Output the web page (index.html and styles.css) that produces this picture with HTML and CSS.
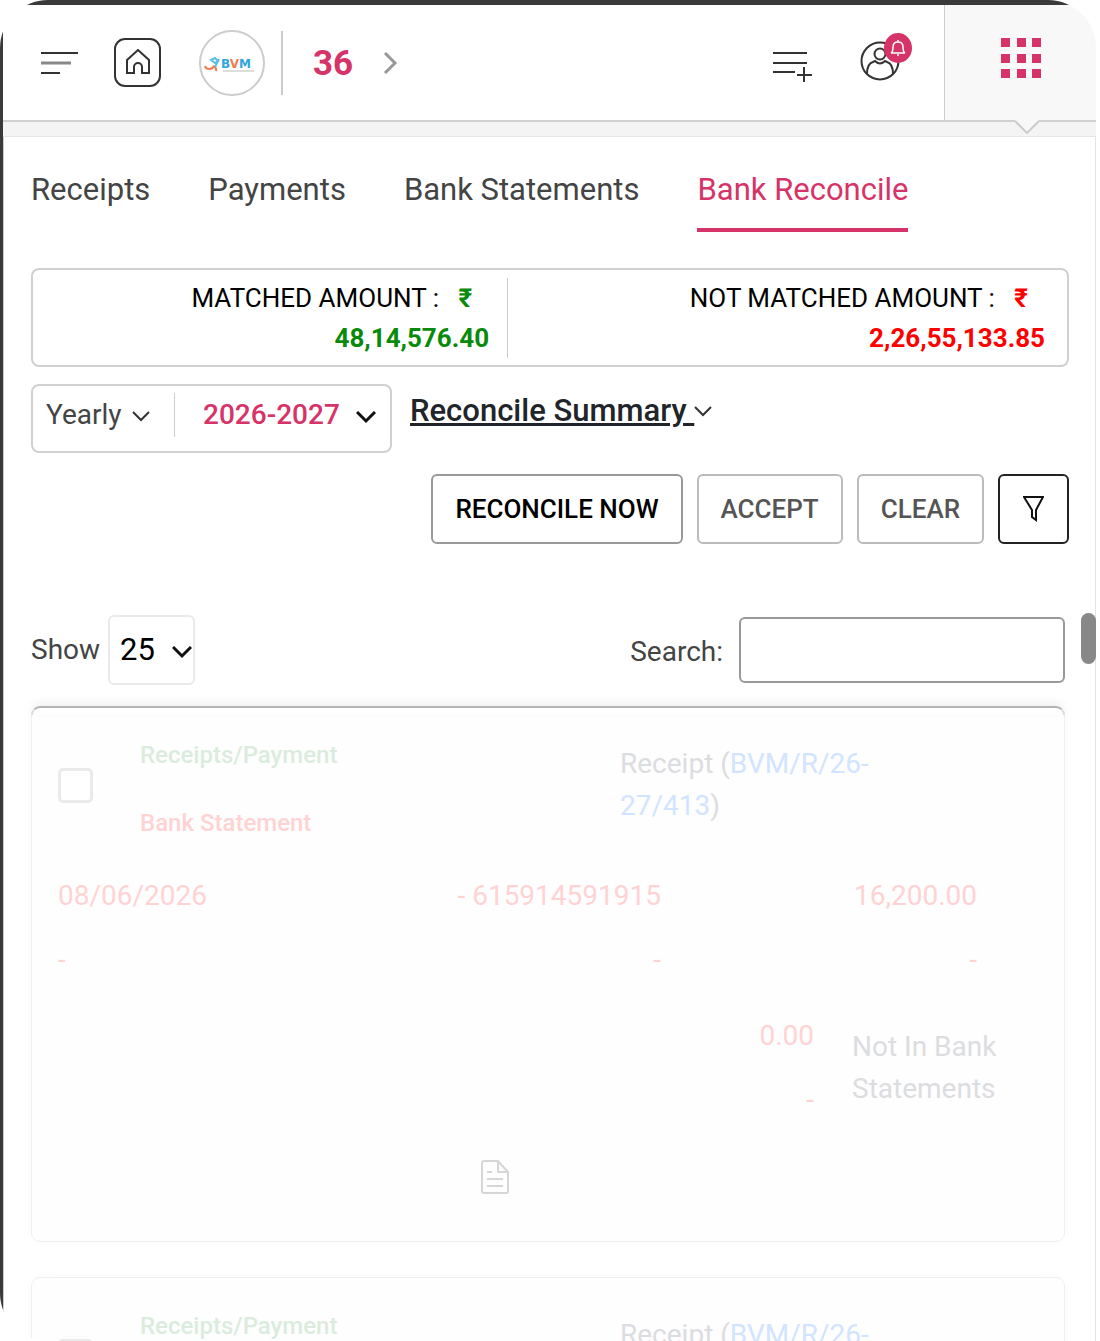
FILE: index.html
```html
<!DOCTYPE html>
<html lang="en">
<head>
<meta charset="utf-8">
<meta name="viewport" content="width=device-width, initial-scale=1">
<title>Bank Reconcile</title>
<link rel="stylesheet" href="styles.css">
</head>
<body>
<div class="frame">
  <div class="screen">
    <header class="topbar">
      <button class="icon-btn menu-btn" aria-label="Menu">
        <svg width="37" height="24" viewBox="0 0 37 24" fill="none" stroke="#333" stroke-width="2"><path d="M0 2h37M0 22h19"/><path d="M0 12h30" stroke="#888" stroke-width="3"/></svg>
      </button>
      <a class="home-btn" href="#" aria-label="Home">
        <svg width="26" height="27" viewBox="0 0 26 27" fill="none" stroke="#333" stroke-width="2"><path d="M2 11 13 1l11 10v13h-7v-6a4 4 0 0 0-8 0v6H2z"/></svg>
      </a>
      <a class="logo" href="#" aria-label="BVM">
        <svg width="56" height="20" viewBox="0 0 56 20">
          <path d="M1 13c1 4 7 4 9 0M9 13q4 2 3 5" fill="none" stroke="#f47a4d" stroke-width="2"/>
          <path d="M7 7l4-2 3 3-3 2zM11 14l4-8" fill="none" stroke="#59bfe3" stroke-width="2"/>
          <text x="17" y="15" class="logo-text"><tspan fill="#2ea5dc">B</tspan><tspan fill="#f47a4d">V</tspan><tspan fill="#2ea5dc">M</tspan></text>
          <path d="M19 18h31" stroke="#ddd" stroke-width="2"/>
        </svg>
      </a>
      <div class="crumb">
        <span class="crumb-num">36</span>
        <svg width="15" height="24" viewBox="0 0 15 24" fill="none" stroke="#999" stroke-width="3"><path d="M2 2l10 10L2 22"/></svg>
      </div>
      <div class="top-actions">
        <button class="icon-btn list-btn" aria-label="Add to list">
          <svg width="40" height="32" viewBox="0 0 40 32" fill="none" stroke="#333" stroke-width="2"><path d="M1 3h34M1 13h34M1 22h22M25 25h15M32 17v15"/></svg>
        </button>
        <button class="icon-btn user-btn" aria-label="Account">
          <svg width="40" height="40" viewBox="0 0 40 40" fill="none" stroke="#333" stroke-width="2"><circle cx="20" cy="20" r="18.500"/><circle cx="20" cy="13" r="5.500"/><path d="M7 33c0-6 2-11 6-12l2-1q5 5 10 0l2 1c4 1 6 6 6 12"/></svg>
          <span class="badge"><svg width="16" height="18" viewBox="0 0 16 18" fill="none" stroke="#fff" stroke-width="1.500"><path d="M8 1v2M1 14c2-1 2-3 2-6 0-3 2-5 5-5s5 2 5 5c0 3 0 5 2 6zM7 16h2"/></svg></span>
        </button>
      </div>
      <button class="apps-btn" aria-label="Apps">
        <svg width="40" height="40" viewBox="0 0 40 40" fill="#d63369"><path d="M0 0h9v9H0zM16 0h9v9h-9zM31 0h9v9h-9zM0 16h9v9H0zM16 16h9v9h-9zM31 16h9v9h-9zM0 31h9v9H0zM16 31h9v9h-9zM31 31h9v9h-9z"/></svg>
      </button>
    </header>
    <div class="strip">
      <svg class="notch" width="24" height="14" viewBox="0 0 24 14"><path d="M0 0h24v1L12 13 0 1z" fill="#f8f8f8"/><path d="M0 1 12 13 24 1" fill="none" stroke="#ccc" stroke-width="2"/></svg>
    </div>

    <main class="content">
      <nav class="tabs">
        <a href="#">Receipts</a>
        <a href="#">Payments</a>
        <a href="#">Bank Statements</a>
        <a href="#" class="active">Bank Reconcile</a>
      </nav>

      <section class="totals">
        <div class="total matched">MATCHED AMOUNT : <b class="rupee">₹</b><br><b>48,14,576.40</b></div>
        <div class="total unmatched">NOT MATCHED AMOUNT : <b class="rupee">₹</b><br><b>2,26,55,133.85</b></div>
      </section>

      <div class="period-row">
        <div class="period">
          <div class="pick pick-mode">
            <select aria-label="Period"><option>Yearly</option></select>
            <svg width="18" height="11" viewBox="0 0 18 11" fill="none" stroke="#333" stroke-width="2"><path d="M1 1l8 8 8-8"/></svg>
          </div>
          <div class="pick pick-year">
            <select aria-label="Year"><option>2026-2027</option></select>
            <svg width="20" height="13" viewBox="0 0 20 13" fill="none" stroke="#111" stroke-width="3"><path d="M1 1l9 9 9-9"/></svg>
          </div>
        </div>
        <a class="summary" href="#"><span>Reconcile Summary&nbsp;</span><svg width="18" height="11" viewBox="0 0 18 11" fill="none" stroke="#333" stroke-width="2"><path d="M1 1l8 8 8-8"/></svg></a>
      </div>

      <div class="actions">
        <button class="btn btn-main">RECONCILE NOW</button>
        <button class="btn">ACCEPT</button>
        <button class="btn">CLEAR</button>
        <button class="btn btn-filter" aria-label="Filter"><svg width="21" height="26" viewBox="0 0 21 26" fill="none" stroke="#111" stroke-width="2"><path d="M1 1h19l-7 13v10l-4-3v-7z"/></svg></button>
      </div>

      <section class="listing">
        <div class="controls">
          <label for="size">Show</label>
          <div class="pick pick-size">
            <select id="size"><option>25</option></select>
            <svg width="20" height="13" viewBox="0 0 20 13" fill="none" stroke="#111" stroke-width="3"><path d="M1 1l9 9 9-9"/></svg>
          </div>
          <label class="search-label" for="search">Search:</label>
          <input id="search" class="search" type="search">
        </div>

        <div class="list-top"></div>
        <article class="card">
          <div class="row-head">
            <input type="checkbox" class="tick" aria-label="Select entry">
            <div class="kinds"><span class="kind-receipt">Receipts/Payment</span><span class="kind-bank">Bank Statement</span></div>
            <div class="ref">Receipt (<a href="#">BVM/R/26-<wbr>27/413</a>)</div>
          </div>
          <div class="row-values">
            <span>08/06/2026</span><span>- 615914591915</span><span>16,200.00</span>
            <span>-</span><span>-</span><span>-</span>
          </div>
          <div class="row-status">
            <div class="diff"><span>0.00</span><span>-</span></div>
            <div class="status">Not In Bank Statements</div>
          </div>
          <div class="row-doc">
            <button class="icon-btn" aria-label="Details"><svg width="28" height="34" viewBox="0 0 28 34" fill="none" stroke="#d6d6d6" stroke-width="2"><path d="M3 1h14l10 11v19a2 2 0 0 1-2 2H3a2 2 0 0 1-2-2V3a2 2 0 0 1 2-2zM17 1v11h10M6 12h5M6 19h16M6 26h16"/></svg></button>
          </div>
        </article>
        <article class="card">
          <div class="row-head">
            <input type="checkbox" class="tick" aria-label="Select entry">
            <div class="kinds"><span class="kind-receipt">Receipts/Payment</span><span class="kind-bank">Bank Statement</span></div>
            <div class="ref">Receipt (<a href="#">BVM/R/26-<wbr>27/413</a>)</div>
          </div>
        </article>
      </section>
    </main>
    <div class="scroll-thumb"></div>
  </div>
</div>
</body>
</html>
```
FILE: styles.css
```css
* { box-sizing: border-box; }

body {
  margin: 0;
  background: #fff;
  color: #444;
  font-family: Roboto, "Liberation Sans", sans-serif;
  font-size: 28px;
  line-height: 42px;
}

a { color: inherit; text-decoration: none; }
svg { display: block; flex: none; }

button, select, input {
  font: inherit;
  color: inherit;
  margin: 0;
}

/* Device frame */
.frame {
  height: 100vh;
  margin-right: 4px;
  padding: 5px 0 0 3px;
  border-radius: 48px 48px 0 48px;
  background:
    linear-gradient(#3a3a3a, #3a3a3a) 0 0 / 100% 5px no-repeat,
    linear-gradient(#3a3a3a, #3a3a3a) 0 0 / 3px 100% no-repeat,
    #fff;
  overflow: hidden;
}

.screen {
  position: relative;
  height: 100%;
  background: #fff;
  overflow: hidden;
}

/* Header */
.topbar {
  display: flex;
  align-items: center;
  height: 117px;
  padding-left: 38px;
  border-bottom: 2px solid #d0d0d0;
}

.icon-btn {
  position: relative;
  padding: 0;
  border: 0;
  background: none;
}

.home-btn {
  display: grid;
  place-items: center;
  width: 47px;
  height: 49px;
  margin: 0 38px 0 36px;
  border: 2px solid #333;
  border-radius: 11px;
}

.logo {
  display: grid;
  place-items: center;
  width: 66px;
  height: 66px;
  border: 2px solid #ccc;
  border-radius: 50%;
}

.logo-text {
  font: bold 12px "DejaVu Sans", sans-serif;
}

.crumb {
  display: flex;
  align-items: center;
  gap: 30px;
  height: 64px;
  margin-left: 16px;
  padding-left: 30px;
  border-left: 2px solid #ccc;
}

.crumb-num {
  padding-top: 2px;
  color: #d63369;
  font-size: 35px;
  font-weight: 700;
}

.top-actions {
  display: flex;
  align-items: center;
  gap: 48px;
  margin-left: auto;
  margin-right: 44px;
}

.list-btn { padding-top: 6px; }
.user-btn { padding-bottom: 4px; }

.badge {
  position: absolute;
  top: -8px;
  left: 24px;
  display: grid;
  place-items: center;
  width: 28px;
  height: 30px;
  border-radius: 50%;
  background: #d63369;
}

.apps-btn {
  align-self: stretch;
  width: 152px;
  padding: 0 0 10px 56px;
  border: 0;
  border-left: 1px solid #ccc;
  background: #f8f8f8;
}

.strip {
  position: relative;
  height: 15px;
  border-bottom: 1px solid #e6e6e6;
  background: #f4f4f4;
}

.notch {
  position: absolute;
  top: -2px;
  right: 57px;
}

/* Content */
.content {
  padding: 32px 26px 0 27px;
  border-left: 1px solid #ccc;
  border-right: 1px solid #e4e4e4;
}

.tabs {
  display: flex;
  gap: 58px;
  font-size: 31px;
}

.tabs a { padding-bottom: 17px; border-bottom: 4px solid transparent; }
.tabs .active { color: #d63369; border-color: #d63369; }

.totals {
  display: grid;
  grid-template-columns: 476fr 560fr;
  margin-top: 36px;
  padding: 8px 0 7px;
  border: 2px solid #d0d0d0;
  border-radius: 8px;
  color: #000;
  font-size: 26px;
  line-height: 40px;
  text-align: right;
}

.matched { padding-right: 18px; border-right: 1px solid #ccc; }
.unmatched { padding-right: 22px; }
.matched b { color: #0a8a0a; }
.unmatched b { color: #f00; }
.total .rupee { margin: 0 17px 0 13px; }

.period-row {
  display: flex;
  align-items: flex-start;
  gap: 18px;
  margin-top: 17px;
}

.period {
  display: flex;
  align-items: center;
  height: 69px;
  padding: 0 14px 7px 13px;
  border: 2px solid #d0d0d0;
  border-radius: 8px;
}

.pick { position: relative; }

.pick select {
  width: 100%;
  height: 44px;
  padding: 0;
  border: 0;
  background: none;
  appearance: none;
  outline: 0;
}

.pick svg {
  position: absolute;
  right: 0;
  top: 50%;
  margin-top: -4px;
  pointer-events: none;
}

.pick-mode {
  width: 129px;
  padding-right: 24px;
  border-right: 1px solid #ccc;
}

.pick-mode svg { right: 24px; }

.pick-year {
  width: 201px;
  padding-left: 28px;
  color: #d63369;
  font-weight: 500;
}

.summary {
  display: flex;
  align-items: center;
  color: #212529;
  font-size: 31px;
  font-weight: 500;
  line-height: 54px;
}

.summary span { text-decoration: underline; }

.actions {
  display: flex;
  justify-content: flex-end;
  gap: 14px;
  margin-top: 21px;
}

.btn {
  height: 70px;
  padding: 0 22px;
  border: 2px solid #bbb;
  border-radius: 6px;
  background: #fff;
  color: #555;
  font-size: 26px;
  font-weight: 500;
}

.btn-main { border-color: #999; color: #000; }
.btn-filter { padding: 0 23px; border-color: #222; }

/* Entries */
.listing { margin-top: 71px; padding-right: 4px; }

.controls {
  display: flex;
  align-items: center;
}

.pick-size {
  width: 87px;
  height: 70px;
  margin-left: 8px;
  border: 2px solid #eaeaea;
  border-radius: 6px;
  color: #000;
  font-size: 31px;
}

.pick-size select { height: 66px; padding-left: 10px; }
.pick-size svg { right: 1px; }

.search-label { margin-left: auto; padding-top: 3px; }

.search {
  width: 326px;
  height: 66px;
  margin-left: 16px;
  padding: 0 12px;
  border: 2px solid #999;
  border-radius: 6px;
  background: #fff;
  appearance: none;
}

.list-top {
  position: relative;
  height: 9px;
  margin: 21px 0 -9px;
  border: 2px solid #b4b4b4;
  border-bottom: 0;
  border-left-color: #ddd;
  border-right-color: #ddd;
  border-radius: 9px 9px 0 0;
  box-shadow: 0 -4px 10px rgba(0, 0, 0, .06);
}

.card {
  padding: 19px 26px 47px;
  margin-bottom: 35px;
  border: 1px solid #f0f0f0;
  border-radius: 9px;
  box-shadow: 0 0 12px rgba(0, 0, 0, .02);
  background: #fefefe;
}

.row-head {
  display: grid;
  grid-template-columns: 82px 480fr 418fr;
  align-items: center;
}

.tick {
  width: 35px;
  height: 35px;
  border: 3px solid #eaeaea;
  border-radius: 5px;
  background: #fff;
  appearance: none;
}

.kinds {
  display: grid;
  gap: 26px;
  padding-top: 8px;
  font-size: 24px;
  font-weight: 500;
}

.kind-receipt { color: #dbecdf; }
.kind-bank { color: #ffd3d3; }
.ref { padding-right: 30%; }
.ref, .status { color: #dcdde0; }
.ref a { color: #d2e4ff; }

.row-values {
  display: grid;
  grid-template-columns: 300fr 303fr 316fr;
  row-gap: 22px;
  margin-top: 31px;
  padding-right: 61px;
  color: #ffd3d3;
  text-align: right;
}

.row-values span:nth-child(3n + 1) { text-align: left; }

.row-status {
  display: grid;
  grid-template-columns: 756fr 186fr;
  column-gap: 38px;
  align-items: center;
  margin-top: 34px;
}

.diff {
  display: grid;
  gap: 22px;
  color: #ffd3d3;
  text-align: right;
}

.row-doc {
  display: grid;
  grid-template-columns: 423fr 557fr;
  margin-top: 39px;
}

.row-doc .icon-btn { grid-column: 2; justify-self: start; }

/* Overlay scrollbar */
.scroll-thumb {
  position: absolute;
  top: 608px;
  right: 0;
  width: 15px;
  height: 51px;
  border-radius: 8px;
  background: #888;
}
```
